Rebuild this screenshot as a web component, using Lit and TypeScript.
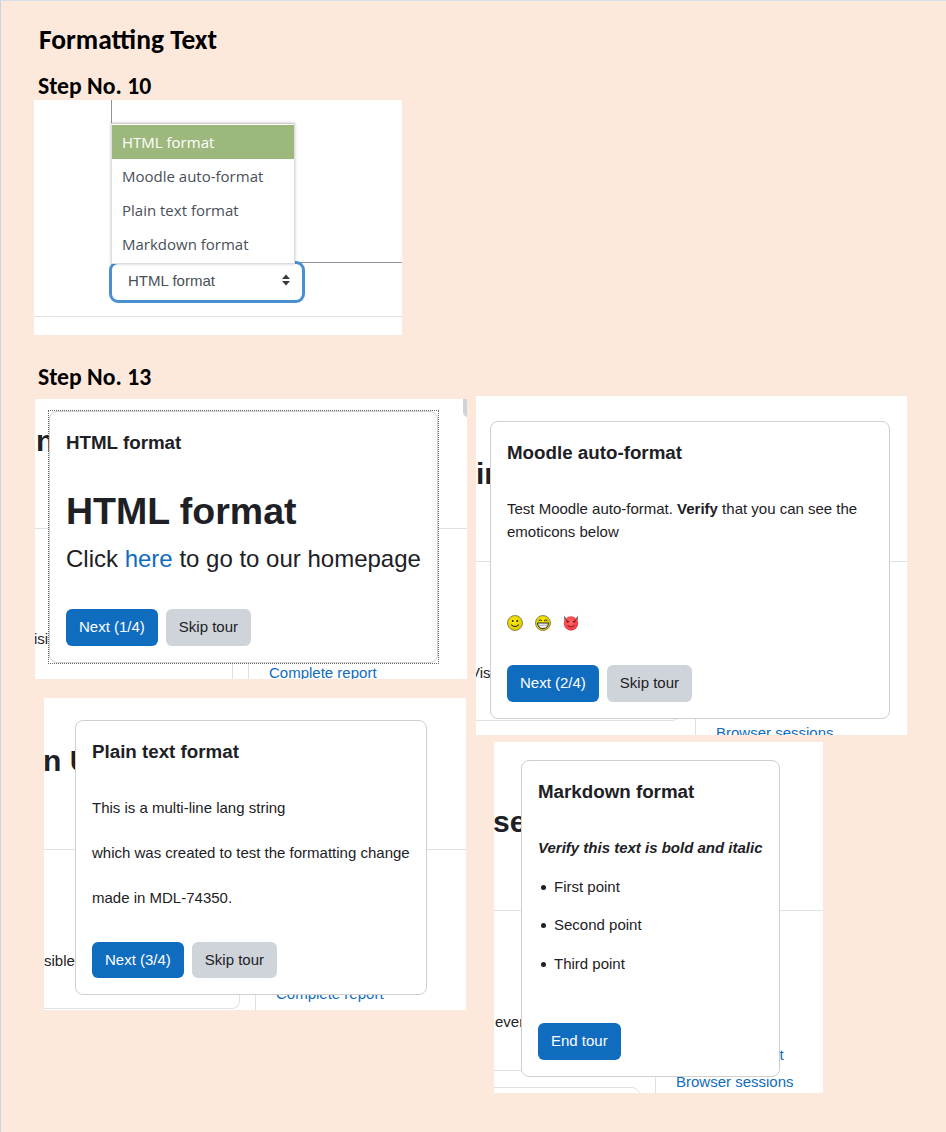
import { LitElement, css, html, nothing, svg } from "lit";
import { customElement } from "lit/decorators.js";

type Scrap = { cls: string; text?: string; x: number; y: number; w?: number; h?: number };

type Tour = {
  left: number;
  top: number;
  width: number;
  height: number;
  title: string;
  body: unknown;
  next: string;
  skip: boolean;
  outline?: boolean;
  short?: boolean;
  scraps: Scrap[];
};

const smile = svg`
  <circle cx="8" cy="8" r="7.5" fill="url(#gold)" stroke="#8c8a50" stroke-width="1"/>
  <circle cx="5.8" cy="6" r="1" fill="#222"/>
  <circle cx="10.2" cy="6" r="1" fill="#222"/>
  <path d="M4 9.5 Q8 13.5 12 9.5" fill="none" stroke="#222" stroke-width="1"/>`;

const grin = svg`
  <circle cx="8" cy="8" r="7.5" fill="url(#gold)" stroke="#8c8a50" stroke-width="1"/>
  <path d="M3.5 6 Q5 3.5 7 6M9 6 Q11 3.5 12.5 6" fill="none" stroke="#222" stroke-width="1"/>
  <path d="M2.5 8 H13.5 Q13 13.5 8 13.5 Q3 13.5 2.5 8Z" fill="#fff" stroke="#222" stroke-width="1"/>
  <path d="M3 10.2 H13" stroke="#777" stroke-width=".7"/>`;

const devil = svg`
  <path d="M1 .5 L3.5 4 L1.5 6Z M15 .5 L12.5 4 L14.5 6Z" fill="#555"/>
  <circle cx="8" cy="8.5" r="7.2" fill="url(#red)"/>
  <path d="M3 4.5 L7 7 L4 7.8Z M13 4.5 L9 7 L12 7.8Z" fill="#8c1418"/>
  <path d="M4.5 10.5 Q8 13.5 11.5 10.5" fill="none" stroke="#8c1418" stroke-width="1"/>`;

const emoticon = (shape: unknown) => html`
  <svg class="emoticon" viewBox="0 0 16 16" width="16" height="16">
    <defs>
      <radialGradient id="gold" cx=".45" cy=".4" r=".65">
        <stop offset="0" stop-color="#fff200"/><stop offset="1" stop-color="#d9c000"/>
      </radialGradient>
      <radialGradient id="red" cx=".45" cy=".4" r=".65">
        <stop offset="0" stop-color="#ff6a6a"/><stop offset="1" stop-color="#e8343c"/>
      </radialGradient>
    </defs>
    ${shape}
  </svg>
`;

const tours: Tour[] = [
  {
    left: 35, top: 399, width: 432, height: 280,
    title: "HTML format",
    body: html`<h1>HTML format</h1><p class="lead">Click <a>here</a> to go to our homepage</p>`,
    next: "Next (1/4)", skip: true, outline: true,
    scraps: [
      { cls: "hr", x: 0, y: 129, w: 432 },
      { cls: "big", text: "n", x: 1, y: 24 },
      { cls: "small", text: "isil", x: -1, y: 229 },
      { cls: "vr", x: 197, y: 264, h: 16 },
      { cls: "vr", x: 213, y: 264, h: 16 },
      { cls: "link", text: "Complete report", x: 234, y: 263 },
      { cls: "thumb", x: 428, y: 0 }
    ]
  },
  {
    left: 476, top: 396, width: 431, height: 339,
    title: "Moodle auto-format",
    body: html`
      <p class="loose">Test Moodle auto-format. <b>Verify</b> that you can see the emoticons below</p>
      <div class="emoticons">${emoticon(smile)}${emoticon(grin)}${emoticon(devil)}</div>
    `,
    next: "Next (2/4)", skip: true,
    scraps: [
      { cls: "hr", x: 0, y: 165, w: 431 },
      { cls: "big", text: "in", x: 0, y: 60 },
      { cls: "small", text: "Vis", x: -6, y: 266 },
      { cls: "box open", x: -20, y: 100, w: 224, h: 225 },
      { cls: "vr", x: 219, y: 323, h: 16 },
      { cls: "link clip", text: "Browser sessions", x: 240, y: 326 }
    ]
  },
  {
    left: 44, top: 698, width: 422, height: 312,
    title: "Plain text format",
    body: html`
      <p class="spaced">This is a multi-line lang string</p>
      <p class="spaced">which was created to test the formatting change</p>
      <p class="spaced">made in MDL-74350.</p>
    `,
    next: "Next (3/4)", skip: true, short: true,
    scraps: [
      { cls: "hr", x: 0, y: 151, w: 422 },
      { cls: "big", text: "n U", x: -1, y: 45 },
      { cls: "small", text: "sible", x: 0, y: 252 },
      { cls: "box open", x: -20, y: 100, w: 216, h: 211 },
      { cls: "vr", x: 211, y: 296, h: 16 },
      { cls: "link", text: "Complete report", x: 232, y: 285 }
    ]
  },
  {
    left: 494, top: 742, width: 329, height: 351,
    title: "Markdown format",
    body: html`
      <p class="verify"><b><i>Verify this text is bold and italic</i></b></p>
      <ul>
        <li>First point</li>
        <li>Second point</li>
        <li>Third point</li>
      </ul>
    `,
    next: "End tour", skip: false,
    scraps: [
      { cls: "hr", x: 0, y: 168, w: 329 },
      { cls: "big", text: "se", x: -1, y: 62 },
      { cls: "small", text: "ever", x: 1, y: 269 },
      { cls: "hr", x: 0, y: 328, w: 30 },
      { cls: "box", x: -20, y: 345, w: 166, h: 30 },
      { cls: "vr", x: 161, y: 328, h: 23 },
      { cls: "link", text: "Complete report", x: 182, y: 302 },
      { cls: "link", text: "Browser sessions", x: 182, y: 329 }
    ]
  }
];

const cardBox: Record<string, { x: number; y: number; w: number; h: number }> = {
  "HTML format": { x: 14, y: 12, w: 389, h: 252 },
  "Moodle auto-format": { x: 14, y: 25, w: 400, h: 298 },
  "Plain text format": { x: 31, y: 22, w: 352, h: 275 },
  "Markdown format": { x: 27, y: 18, w: 259, h: 317 }
};

@customElement("app-root")
export class AppRoot extends LitElement {
  static styles = css`
    :host {
      display: block;
      position: relative;
      width: 946px;
      height: 1132px;
      overflow: hidden;
      box-sizing: border-box;
      background: #fde9db;
      border-top: 1px solid #d5e0ec;
      border-left: 1px solid #c6d5e8;
      margin: 0;
    }

    .doc-title,
    .step {
      position: absolute;
      margin: 0;
      font-family: Carlito, Lato, "Liberation Sans", sans-serif;
      font-weight: 700;
      color: #000;
      white-space: nowrap;
    }

    .doc-title {
      left: 38px;
      top: 24px;
      font-size: 27.5px;
      line-height: 30px;
    }

    .step {
      left: 37px;
      font-size: 23.7px;
      line-height: 28px;
    }

    .panel {
      position: absolute;
      background: #fff;
      overflow: hidden;
      font-family: "Liberation Sans", Arial, sans-serif;
      color: #1d2125;
    }

    .picker {
      left: 33px;
      top: 99px;
      width: 368px;
      height: 235px;
      font-family: "Open Sans", "Noto Sans", sans-serif;
      color: #495057;
    }

    .picker .stem {
      position: absolute;
      left: 77px;
      top: 0;
      width: 1px;
      height: 24px;
      background: #8f959e;
    }

    .picker .rule {
      position: absolute;
      left: 261px;
      top: 162px;
      right: 0;
      height: 1px;
      background: #8f959e;
    }

    .picker .foot {
      position: absolute;
      left: 0;
      right: 0;
      top: 216px;
      height: 1px;
      background: #dee2e6;
    }

    .menu {
      position: absolute;
      left: 77px;
      top: 23px;
      width: 184px;
      height: 141px;
      box-sizing: border-box;
      padding-top: 1px;
      background: #fff;
      border: 1px solid #ddd;
      border-top-color: #ccc;
      box-shadow: 0 0 3px rgba(0, 0, 0, 0.22);
      z-index: 3;
    }

    .menu div {
      height: 34px;
      padding-left: 10px;
      font-size: 15px;
      line-height: 34px;
      white-space: nowrap;
    }

    .menu .on {
      background: #9db87c;
      color: #fff;
    }

    .select {
      position: absolute;
      left: 75px;
      top: 161px;
      width: 196px;
      height: 42px;
      box-sizing: border-box;
      display: flex;
      align-items: center;
      justify-content: space-between;
      padding: 0 11px 4px 16px;
      border: 3.5px solid #4a90d0;
      border-radius: 9px;
      font-family: "Liberation Sans", Arial, sans-serif;
      font-size: 15px;
      background: #fff;
      z-index: 2;
    }

    .tour {
      position: absolute;
      z-index: 1;
      box-sizing: border-box;
      padding: 20px 16px 16px;
      background: #fff;
      border: 1px solid #cfcfcf;
      border-radius: 8px;
      display: flex;
      flex-direction: column;
      font-size: 15px;
      line-height: 22.5px;
    }

    .tour.outlined::before {
      content: "";
      position: absolute;
      inset: -2px;
      border: 1px dotted #666;
      pointer-events: none;
    }

    .tour h5 {
      margin: 0;
      font-size: 18.75px;
      line-height: 22.5px;
      font-weight: 700;
      white-space: nowrap;
    }

    .tour .body {
      flex: 1;
      padding-top: 33px;
    }

    .tour p {
      margin: 0;
    }

    .tour h1 {
      margin: 1px 0 7px;
      font-size: 37.5px;
      line-height: 45px;
      font-weight: 700;
      white-space: nowrap;
    }

    .tour .lead {
      font-size: 24px;
      line-height: 35px;
      white-space: nowrap;
    }

    .tour a {
      color: #0f6cbf;
    }

    .tour .loose {
      margin-top: -1px;
      line-height: 23px;
    }

    .tour .spaced {
      margin-bottom: 22.5px;
      white-space: nowrap;
    }

    .tour .verify {
      margin-bottom: 16.75px;
    }

    .tour ul {
      margin: 0;
      padding: 0 0 0 16px;
      list-style: none;
    }

    .tour li {
      position: relative;
      margin-bottom: 16px;
    }

    .tour li::before {
      content: "";
      position: absolute;
      left: -13.5px;
      top: 9px;
      width: 5px;
      height: 5px;
      border-radius: 50%;
      background: #1d2125;
    }

    .emoticons {
      display: flex;
      gap: 12px;
      margin-top: 72px;
    }

    .emoticon {
      display: block;
      overflow: visible;
    }

    .actions {
      display: flex;
      gap: 8px;
    }

    .btn {
      height: 37px;
      box-sizing: border-box;
      padding: 0 13px;
      border-radius: 6px;
      font-size: 15px;
      line-height: 36px;
      white-space: nowrap;
    }

    .short .btn {
      height: 36px;
      line-height: 35px;
    }

    .btn.primary {
      background: #0f6cbf;
      color: #fff;
    }

    .btn.secondary {
      background: #ced4da;
      color: #1d2125;
    }

    .hr,
    .vr,
    .big,
    .small,
    .link,
    .box,
    .thumb {
      position: absolute;
    }

    .hr {
      height: 1px;
      background: #dee2e6;
    }

    .vr {
      width: 1px;
      background: #dee2e6;
    }

    .big {
      font-size: 30px;
      line-height: 36px;
      font-weight: 700;
      white-space: pre;
    }

    .small {
      font-size: 15px;
      line-height: 22px;
    }

    .link {
      font-size: 15px;
      line-height: 22px;
      color: #0f6cbf;
      white-space: nowrap;
    }

    .box {
      box-sizing: border-box;
      border: 1px solid #dee2e6;
      border-radius: 8px;
    }

    .box.open {
      border-top: none;
      border-radius: 0 0 8px 8px;
    }

    .thumb {
      width: 6px;
      height: 18px;
      background: #ced4da;
      border-bottom-left-radius: 5px;
    }
  `;

  private renderScrap(scrap: Scrap) {
    const size = [
      `left:${scrap.x}px`,
      `top:${scrap.y}px`,
      scrap.w !== undefined ? `width:${scrap.w}px` : "",
      scrap.h !== undefined ? `height:${scrap.h}px` : ""
    ].join(";");
    return html`<div class=${scrap.cls} style=${size}>${scrap.text ?? nothing}</div>`;
  }

  private renderTour(tour: Tour) {
    const box = cardBox[tour.title];
    return html`
      <section
        class="panel"
        style="left:${tour.left - 1}px;top:${tour.top - 1}px;width:${tour.width}px;height:${tour.height}px"
      >
        ${tour.scraps.map((scrap) => this.renderScrap(scrap))}
        <div
          class="tour ${tour.outline ? "outlined" : ""} ${tour.short ? "short" : ""}"
          style="left:${box.x}px;top:${box.y}px;width:${box.w}px;height:${box.h}px"
        >
          <h5>${tour.title}</h5>
          <div class="body">${tour.body}</div>
          <div class="actions">
            <div class="btn primary">${tour.next}</div>
            ${tour.skip ? html`<div class="btn secondary">Skip tour</div>` : nothing}
          </div>
        </div>
      </section>
    `;
  }

  protected render() {
    return html`
      <h1 class="doc-title">Formatting Text</h1>
      <h2 class="step" style="top:71px">Step No. 10</h2>
      <section class="panel picker">
        <div class="stem"></div>
        <div class="rule"></div>
        <div class="foot"></div>
        <div class="menu">
          <div class="on">HTML format</div>
          <div>Moodle auto-format</div>
          <div>Plain text format</div>
          <div>Markdown format</div>
        </div>
        <div class="select">
          <span>HTML format</span>
          <svg width="10" height="14" viewBox="0 0 10 14">
            <path d="M5 1.5 L9 6 H1Z M5 12.5 L9 8 H1Z" fill="#343a40"></path>
          </svg>
        </div>
      </section>
      <h2 class="step" style="top:362px">Step No. 13</h2>
      ${tours.map((tour) => this.renderTour(tour))}
    `;
  }
}
